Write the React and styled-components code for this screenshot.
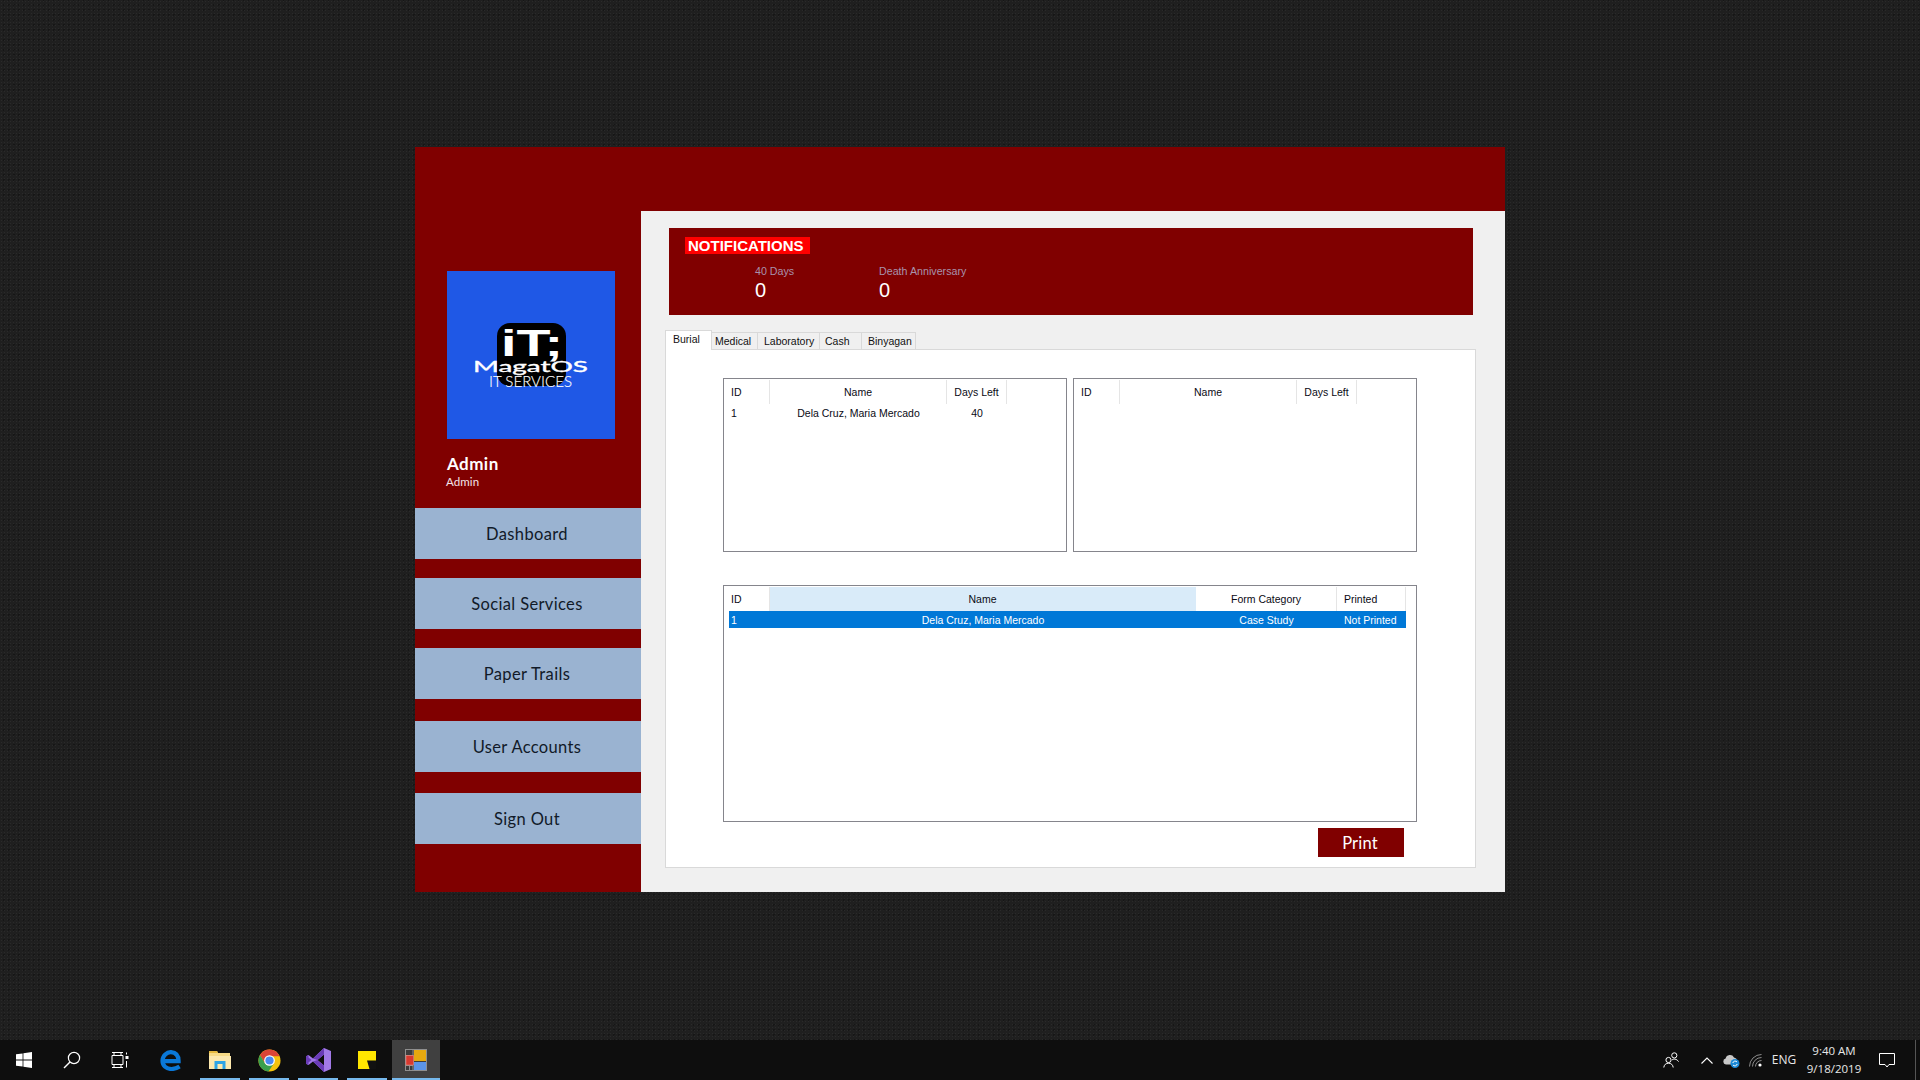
import styled, { createGlobalStyle } from 'styled-components'

const GlobalStyle = createGlobalStyle`
  html, body, #root {
    margin: 0;
    height: 100%;
  }
  body {
    overflow: hidden;
    font-family: 'Liberation Sans', Arial, sans-serif;
  }
  * {
    box-sizing: border-box;
  }
`

const Desktop = styled.div`
  width: 1920px;
  height: 1080px;
  display: flex;
  flex-direction: column;
  background-color: #1f1f1f;
  background-image:
    radial-gradient(rgba(255, 255, 255, 0.05) 1px, transparent 1px),
    radial-gradient(rgba(0, 0, 0, 0.28) 1px, transparent 1px);
  background-size: 3px 3px, 5px 5px;
  background-position: 0 0, 1px 2px;
`
const WindowArea = styled.main`
  flex: 1;
  padding-bottom: 1px;
  display: flex;
  align-items: center;
  justify-content: center;
`
const AppWindow = styled.div`
  width: 1090px;
  height: 745px;
  display: flex;
  background: #800000;
`

/* sidebar */
const Sidebar = styled.aside`
  width: 226px;
  padding-top: 124px;
  display: flex;
  flex-direction: column;
`
const LogoBox = styled.div`
  width: 168px;
  height: 168px;
  margin-left: 32px;
  background: #1f58e6;
  svg {
    display: block;
  }
`
const UserBlock = styled.div`
  height: 69px;
  padding: 15px 0 0 32px;
  font-family: Lato, 'Open Sans', sans-serif;
  color: #fff;
`
const UserName = styled.div`
  font-size: 17px;
  line-height: 20px;
  font-weight: 700;
  letter-spacing: 0.45px;
`
const UserRole = styled.div`
  font-size: 11.5px;
  line-height: 14px;
  margin: 1px 0 0 -1px;
  letter-spacing: 0.1px;
  color: #f4e6ea;
`
const NavList = styled.nav`
  display: flex;
  flex-direction: column;
`
const NavButton = styled.div`
  height: 51px;
  margin-bottom: ${(p) => p.$after}px;
  padding-right: 2px;
  display: flex;
  align-items: center;
  justify-content: center;
  background: #9ab3d1;
  color: #111a28;
  font-family: Lato, 'Open Sans', sans-serif;
  font-size: 16.5px;
  font-weight: 400;
  letter-spacing: 0.35px;
`

/* right pane */
const Pane = styled.section`
  width: 864px;
  margin-top: 64px;
  padding: 17px 29px 24px 24px;
  background: #f0f0f0;
  display: flex;
  flex-direction: column;
`
const NotifPanel = styled.div`
  height: 87px;
  margin: 0 3px 15px 4px;
  padding: 9px 0 0 16px;
  background: #800000;
`
const NotifBadge = styled.div`
  width: 125px;
  height: 17px;
  padding-left: 3px;
  background: #ff0000;
  color: #fff;
  font-size: 15px;
  line-height: 17px;
  font-weight: 700;
`
const StatRow = styled.div`
  display: flex;
  margin: 10px 0 0 70px;
`
const Stat = styled.div`
  width: 124px;
`
const StatLabel = styled.div`
  font-size: 10.7px;
  line-height: 14px;
  color: #a893ac;
`
const StatValue = styled.div`
  font-size: 20px;
  line-height: 22px;
  margin-top: 1px;
  color: #fff;
`

/* tabs */
const TabStrip = styled.div`
  height: 20px;
  display: flex;
  align-items: flex-end;
  position: relative;
  z-index: 1;
  margin-bottom: -1px;
`
const Tab = styled.div`
  width: ${(p) => p.$w}px;
  height: ${(p) => (p.$active ? 20 : 18)}px;
  padding-left: ${(p) => p.$pad}px;
  margin-left: ${(p) => (p.$first ? 0 : -1)}px;
  background: ${(p) => (p.$active ? '#fff' : '#f0f0f0')};
  border: 1px solid #d9d9d9;
  border-bottom: ${(p) => (p.$active ? '0' : '1px solid #d9d9d9')};
  font-size: 10.5px;
  line-height: 17px;
  color: #111;
  white-space: nowrap;
`
const TabPage = styled.div`
  flex: 1;
  padding: 28px 0 0 57px;
  background: #fff;
  border: 1px solid #d9d9d9;
`
const ListRow = styled.div`
  display: flex;
  gap: 6px;
  margin-bottom: 33px;
`
const ListBox = styled.div`
  width: ${(p) => p.$w}px;
  height: ${(p) => p.$h}px;
  padding: 1px 0 0 5px;
  background: #fff;
  border: 1px solid #85858c;
  font-size: 10.5px;
  color: #0a0a14;
`
const GridRow = styled.div`
  display: grid;
  grid-template-columns: ${(p) => p.$cols};
  height: ${(p) => p.$h}px;
`
const HeadCell = styled.div`
  display: flex;
  align-items: center;
  justify-content: ${(p) => (p.$align === 'center' ? 'center' : 'flex-start')};
  padding-left: ${(p) => p.$pad}px;
  background: ${(p) => (p.$hot ? '#d9ebf9' : 'transparent')};
  border-right: 1px solid ${(p) => (p.$hot ? '#d9ebf9' : '#e5e5e5')};
  white-space: nowrap;
`
const BodyCell = styled.div`
  display: flex;
  align-items: center;
  justify-content: ${(p) => (p.$align === 'center' ? 'center' : 'flex-start')};
  padding-top: 1px;
  padding-left: ${(p) => p.$pad}px;
  background: ${(p) => (p.$selected ? '#0078d7' : 'transparent')};
  color: ${(p) => (p.$selected ? '#fff' : 'inherit')};
  white-space: nowrap;
`
const PrintRow = styled.div`
  display: flex;
  justify-content: flex-end;
  width: 681px;
  margin-top: 6px;
`
const PrintButton = styled.div`
  width: 86px;
  height: 29px;
  padding-right: 2px;
  display: flex;
  align-items: center;
  justify-content: center;
  background: #800000;
  color: #fff;
  font-family: Lato, 'Open Sans', sans-serif;
  font-size: 16.5px;
  font-weight: 400;
  letter-spacing: 0.2px;
`

/* taskbar */
const Taskbar = styled.footer`
  height: 40px;
  display: flex;
  background: #0e0e0e;
  color: #e8e8e8;
`
const IconSlot = styled.div`
  width: ${(p) => p.$w || 48}px;
  height: 40px;
  display: flex;
  align-items: center;
  justify-content: center;
`
const AppGroup = styled.div`
  display: flex;
  gap: 1px;
  margin-left: 3px;
`
const AppSlot = styled.div`
  width: 48px;
  height: 40px;
  display: flex;
  align-items: center;
  justify-content: center;
  position: relative;
  background: ${(p) => (p.$active ? '#404040' : 'transparent')};
  &::after {
    content: '';
    display: ${(p) => (p.$running ? 'block' : 'none')};
    position: absolute;
    left: ${(p) => (p.$active ? 0 : 4)}px;
    right: ${(p) => (p.$active ? 0 : 4)}px;
    bottom: 0;
    height: 2px;
    background: #76b9ed;
  }
`
const Tray = styled.div`
  margin-left: auto;
  display: flex;
  padding-right: 4px;
`
const TrayText = styled.div`
  width: ${(p) => p.$w}px;
  height: 40px;
  display: flex;
  flex-direction: column;
  align-items: center;
  justify-content: center;
  font-family: 'Open Sans', 'Noto Sans', sans-serif;
  font-size: ${(p) => p.$size}px;
  line-height: 18px;
`
const DesktopPeek = styled.div`
  width: 1px;
  margin-left: 9px;
  background: #555;
`

const WinIcon = () => (
  <svg width="16" height="16" viewBox="0 0 16 16" fill="#fff">
    <path d="M0 2.3 6.6 1.4V7.6H0ZM7.4 1.3 16 0V7.6H7.4ZM0 8.4H6.6V14.6L0 13.7ZM7.4 8.4H16V16L7.4 14.7Z" />
  </svg>
)
const SearchIcon = () => (
  <svg width="18" height="18" viewBox="0 0 18 18" fill="none" stroke="#fff">
    <circle cx="11" cy="7" r="5.6" strokeWidth="1.2" />
    <path d="M7 11 1 17" strokeWidth="1.4" />
  </svg>
)
const TaskViewIcon = () => (
  <svg width="18" height="16" viewBox="0 0 18 16" fill="none" stroke="#fff" strokeWidth="1">
    <path d="M1 .5H12M1 15.5H12M1 12.5V3.5H12V12.5H1M3 1V3M10 1V3M3 13V15M10 13V15" />
    <rect x="14.5" y="4" width="3" height="3" fill="#fff" stroke="none" />
    <path d="M15.5 .5V2.5M15.5 9V15.5" />
  </svg>
)
const EdgeIcon = () => (
  <svg width="22" height="22" viewBox="0 0 22 22" fill="none" stroke="#0a78d8" strokeWidth="4.2">
    <path d="M3 12.2H18.6C18.6 6.5 15.5 3.6 11 3.2 6.8 3 2.7 6.6 2.5 11.5 2.3 16.8 6.5 20 11.5 20 14.5 20 17 19.3 19.6 17.6" />
  </svg>
)
const FolderIcon = () => (
  <svg width="22" height="20" viewBox="0 0 22 20">
    <path d="M0 1H8L9 3H21V19H0Z" fill="#f8db86" />
    <path d="M0 1H8L9 3H0Z" fill="#e6b93e" />
    <path d="M0 6H22V19H0Z" fill="#fde9ae" />
    <path d="M5.5 19V11H16.5V19H13.5V14H8.5V19Z" fill="#2ea5e6" />
  </svg>
)
const ChromeIcon = () => (
  <svg width="23" height="23" viewBox="0 0 24 24">
    <circle cx="12" cy="12" r="11.5" fill="#f4c20d" />
    <path d="M12 .5A11.5 11.5 0 0 0 2 6.3L7.6 15.5 12 7.5H22.5A11.5 11.5 0 0 0 12 .5Z" fill="#db4437" />
    <path d="M2 6.3A11.5 11.5 0 0 0 11 23.5L16.5 15 7.6 15.5Z" fill="#3a9f4e" />
    <circle cx="12" cy="12" r="5.6" fill="#fff" />
    <circle cx="12" cy="12" r="4.3" fill="#4a89f0" />
  </svg>
)
const VisualStudioIcon = () => (
  <svg width="25" height="24" viewBox="0 0 25 24">
    <path d="M18 0 25 3V21L18 24 7 13.5 2.5 17 0 15.8V8.2L2.5 7 7 10.5ZM18 6.5 11.5 12 18 17.5Z" fill="#a27ae8" />
    <path d="M18 0V6.5L11.5 12 7 10.5ZM18 24V17.5L11.5 12 7 13.5ZM2.5 7V17L0 15.8V8.2ZM2.5 9.5 5.5 12 2.5 14.5Z" fill="#6a3cb8" />
  </svg>
)
const StickyIcon = () => (
  <svg width="18" height="18" viewBox="0 0 18 18">
    <path d="M0 0H18V18H0Z" fill="#ffe600" />
    <path d="M9 9.5H18V18H11.5Z" fill="#111" />
  </svg>
)
const AppIcon = () => (
  <svg width="22" height="22" viewBox="0 0 22 22">
    <rect x="0.5" y="0.5" width="21" height="21" fill="#3c3c3c" stroke="#8f8f8f" />
    <path d="M1 6.5H8M1 16.5H8M4.5 16.5V21.5M8 1V21" stroke="#8f8f8f" />
    <rect x="1" y="6.5" width="7.5" height="9.5" fill="#d83a30" stroke="#e98a80" strokeWidth=".6" />
    <rect x="9" y="1" width="12" height="11" fill="#e7a90f" />
    <rect x="9" y="13" width="12" height="8" fill="#5b94e6" />
  </svg>
)
const PeopleIcon = () => (
  <svg width="16" height="16" viewBox="0 0 16 16" fill="none" stroke="#fff" strokeWidth="1">
    <circle cx="5.5" cy="8" r="2.6" />
    <path d="M.8 15.5C1 12.8 3 11.2 5.5 11.2S10 12.8 10.2 15.5" />
    <circle cx="11.3" cy="3.4" r="2.6" />
    <path d="M9 8C10.5 6.6 13.5 6.6 15.6 9.6" />
  </svg>
)
const ChevronIcon = () => (
  <svg width="12" height="7" viewBox="0 0 12 7" fill="none" stroke="#fff" strokeWidth="1.1">
    <path d="M.5 6.5 6 1 11.5 6.5" />
  </svg>
)
const CloudIcon = () => (
  <svg width="17" height="15" viewBox="0 0 17 15">
    <path d="M3 11.5A3 3 0 0 1 2.6 5.6 4.5 4.5 0 0 1 11 4.4 3.5 3.5 0 0 1 14 7.5V11.5Z" fill="#c8c8c8" />
    <circle cx="12" cy="10.5" r="4.5" fill="#1c8ad8" />
    <path d="M9.8 10A2.4 2.4 0 0 1 14 9M14.2 11A2.4 2.4 0 0 1 10 12" stroke="#fff" strokeWidth="1" fill="none" />
  </svg>
)
const WifiIcon = () => (
  <svg width="14" height="13" viewBox="0 0 14 13" fill="none" stroke="#8d8d8d" strokeWidth="1">
    <path d="M.5 12.5A12 12 0 0 1 12.5 .5M3.5 12.5A9 9 0 0 1 12.5 3.5M6.5 12.5A6 6 0 0 1 12.5 6.5" />
    <circle cx="11" cy="11" r="1.6" fill="#fff" stroke="none" />
  </svg>
)
const ActionIcon = () => (
  <svg width="16" height="16" viewBox="0 0 16 16" fill="none" stroke="#fff" strokeWidth="1">
    <path d="M.5 1.5H15.5V12.5H10L8 15 6 12.5H.5Z" />
  </svg>
)

const Logo = () => (
  <svg width="168" height="168" viewBox="0 0 168 168">
    <rect x="50" y="52" width="69" height="63" rx="13" fill="#000" />
    <text x="54" y="85" fontFamily="'Liberation Sans', sans-serif" fontWeight="700" fontSize="37" fill="#fff" textLength="62" lengthAdjust="spacingAndGlyphs">
      iT;
    </text>
    <text x="26" y="101" fontFamily="Lato, sans-serif" fontWeight="400" fontSize="16" fill="#fff" stroke="#fff" strokeWidth=".35" textLength="115" lengthAdjust="spacingAndGlyphs">
      MagatOS
    </text>
    <text x="42" y="116" fontFamily="Lato, sans-serif" fontWeight="300" fontSize="16.5" fill="#fff" stroke="#fff" strokeWidth=".15" textLength="83" lengthAdjust="spacingAndGlyphs">
      IT SERVICES
    </text>
  </svg>
)

const navItems = [
  ['Dashboard', 19],
  ['Social Services', 19],
  ['Paper Trails', 22],
  ['User Accounts', 21],
  ['Sign Out', 0],
]

const tabs = [
  { label: 'Burial', w: 47, pad: 7, active: true },
  { label: 'Medical', w: 47, pad: 3 },
  { label: 'Laboratory', w: 63, pad: 6 },
  { label: 'Cash', w: 43, pad: 5 },
  { label: 'Binyagan', w: 55, pad: 6 },
]

const dayCols = [
  { label: 'ID', w: 41, pad: 2 },
  { label: 'Name', w: 177, align: 'center' },
  { label: 'Days Left', w: 60, align: 'center' },
]
const formCols = [
  { label: 'ID', w: 41, pad: 2 },
  { label: 'Name', w: 426, align: 'center', hot: true },
  { label: 'Form Category', w: 141, align: 'center' },
  { label: 'Printed', w: 69, pad: 7 },
]

function ListView({ w, h, cols, rows = [], selected }) {
  const template = cols.map((c) => `${c.w}px`).join(' ')
  return (
    <ListBox $w={w} $h={h}>
      <GridRow $cols={template} $h={24}>
        {cols.map((c) => (
          <HeadCell key={c.label} $align={c.align} $pad={c.pad || 0} $hot={c.hot}>
            {c.label}
          </HeadCell>
        ))}
      </GridRow>
      {rows.map((row) => (
        <GridRow key={row[0]} $cols={template} $h={17}>
          {row.map((text, i) => (
            <BodyCell key={i} $align={cols[i].align} $pad={cols[i].pad || 0} $selected={selected}>
              {text}
            </BodyCell>
          ))}
        </GridRow>
      ))}
    </ListBox>
  )
}

function App() {
  return (
    <Desktop>
      <GlobalStyle />
      <WindowArea>
        <AppWindow>
          <Sidebar>
            <LogoBox>
              <Logo />
            </LogoBox>
            <UserBlock>
              <UserName>Admin</UserName>
              <UserRole>Admin</UserRole>
            </UserBlock>
            <NavList>
              {navItems.map(([label, after]) => (
                <NavButton key={label} $after={after}>
                  {label}
                </NavButton>
              ))}
            </NavList>
          </Sidebar>
          <Pane>
            <NotifPanel>
              <NotifBadge>NOTIFICATIONS</NotifBadge>
              <StatRow>
                <Stat>
                  <StatLabel>40 Days</StatLabel>
                  <StatValue>0</StatValue>
                </Stat>
                <Stat>
                  <StatLabel>Death Anniversary</StatLabel>
                  <StatValue>0</StatValue>
                </Stat>
              </StatRow>
            </NotifPanel>
            <TabStrip>
              {tabs.map((t, i) => (
                <Tab key={t.label} $w={t.w} $pad={t.pad} $active={t.active} $first={i === 0}>
                  {t.label}
                </Tab>
              ))}
            </TabStrip>
            <TabPage>
              <ListRow>
                <ListView w={344} h={174} cols={dayCols} rows={[['1', 'Dela Cruz, Maria Mercado', '40']]} />
                <ListView w={344} h={174} cols={dayCols} />
              </ListRow>
              <ListView
                w={694}
                h={237}
                cols={formCols}
                rows={[['1', 'Dela Cruz, Maria Mercado', 'Case Study', 'Not Printed']]}
                selected
              />
              <PrintRow>
                <PrintButton>Print</PrintButton>
              </PrintRow>
            </TabPage>
          </Pane>
        </AppWindow>
      </WindowArea>
      <Taskbar>
        <IconSlot><WinIcon /></IconSlot>
        <IconSlot><SearchIcon /></IconSlot>
        <IconSlot><TaskViewIcon /></IconSlot>
        <AppGroup>
          <AppSlot><EdgeIcon /></AppSlot>
          <AppSlot $running><FolderIcon /></AppSlot>
          <AppSlot $running><ChromeIcon /></AppSlot>
          <AppSlot $running><VisualStudioIcon /></AppSlot>
          <AppSlot $running><StickyIcon /></AppSlot>
          <AppSlot $running $active><AppIcon /></AppSlot>
        </AppGroup>
        <Tray>
          <IconSlot><PeopleIcon /></IconSlot>
          <IconSlot $w={24}><ChevronIcon /></IconSlot>
          <IconSlot $w={24}><CloudIcon /></IconSlot>
          <IconSlot $w={25}><WifiIcon /></IconSlot>
          <TrayText $w={32} $size={12}>ENG</TrayText>
          <TrayText $w={68} $size={11.5}>
            <span>9:40 AM</span>
            <span>9/18/2019</span>
          </TrayText>
          <IconSlot $w={38}><ActionIcon /></IconSlot>
          <DesktopPeek />
        </Tray>
      </Taskbar>
    </Desktop>
  )
}

export default App
